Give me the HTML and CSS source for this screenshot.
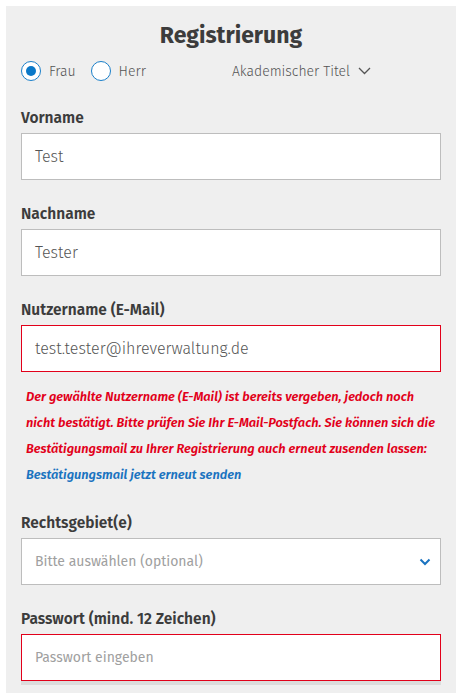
FILE: index.html
```html
<!DOCTYPE html>
<html lang="de">
<head>
<meta charset="utf-8">
<title>Registrierung</title>
<link rel="stylesheet" href="styles.css">
</head>
<body>
<div class="panel">
  <h1 class="title">Registrierung</h1>
  <div class="salutation">
    <label class="radio"><span class="circle checked"></span><span>Frau</span></label>
    <label class="radio"><span class="circle"></span><span>Herr</span></label>
    <span class="title-select">Akademischer Titel
      <svg width="13" height="8" viewBox="0 0 13 8"><path d="M1 1l5.5 5.5L12 1" fill="none" stroke="#555" stroke-width="1.3"/></svg>
    </span>
  </div>

  <div class="field">
    <div class="label">Vorname</div>
    <div class="input">Test</div>
  </div>
  <div class="field">
    <div class="label">Nachname</div>
    <div class="input">Tester</div>
  </div>
  <div class="field">
    <div class="label">Nutzername (E-Mail)</div>
    <div class="input error">test.tester@ihreverwaltung.de</div>
    <p class="error-text">Der gewählte Nutzername (E-Mail) ist bereits vergeben, jedoch noch nicht bestätigt. Bitte prüfen Sie Ihr E-Mail-Postfach. Sie können sich die Bestätigungsmail zu Ihrer Registrierung auch erneut zusenden lassen: <a class="link" href="#">Bestätigungsmail jetzt erneut senden</a></p>
  </div>
  <div class="field after-error">
    <div class="label">Rechtsgebiet(e)</div>
    <div class="input select"><span class="placeholder">Bitte auswählen (optional)</span>
      <svg width="12" height="8" viewBox="0 0 12 8"><path d="M1.5 1.5L6 6l4.5-4.5" fill="none" stroke="#1a73c0" stroke-width="2"/></svg>
    </div>
  </div>
  <div class="field">
    <div class="label">Passwort (mind. 12 Zeichen)</div>
    <div class="input error"><span class="placeholder">Passwort eingeben</span></div>
    <div class="meter"></div>
  </div>
</div>
</body>
</html>
```
FILE: styles.css
```css
* { box-sizing: border-box; }
html, body { margin: 0; padding: 0; background: #fff; }
body {
  font-family: "Fira Sans", "Open Sans", "Noto Sans", sans-serif;
  color: #3c3c3c;
  padding: 6px 8px 0 6px;
}
.panel {
  background: #efefef;
  padding: 14px 15px 20px 15px;
  min-height: 700px;
}
.title {
  margin: 0;
  text-align: center;
  font-size: 23px;
  font-weight: 700;
  line-height: 30px;
  color: #3c3c3c;
}
.salutation {
  display: flex;
  align-items: center;
  height: 26px;
  margin-top: 8px;
}
.radio {
  display: flex;
  align-items: center;
  gap: 8px;
  font-size: 14px;
  font-weight: 300;
  color: #555;
  margin-right: 15px;
}
.circle {
  width: 20px;
  height: 20px;
  border: 1.5px solid #1a7fc9;
  border-radius: 50%;
  background: #fff;
  position: relative;
}
.circle.checked::after {
  content: "";
  position: absolute;
  left: 3.5px; top: 3.5px;
  width: 10px; height: 10px;
  border-radius: 50%;
  background: #0a78c8;
}
.title-select {
  margin-left: 71px;
  display: flex;
  align-items: center;
  gap: 8px;
  font-size: 14px;
  font-weight: 300;
  color: #555;
}
.field { margin-top: 24px; }
.field.after-error { margin-top: 25px; }
.label {
  font-size: 15.5px;
  font-weight: 600;
  line-height: 20px;
  color: #3c3c3c;
  margin-bottom: 5px;
}
.input {
  height: 47px;
  background: #fff;
  border: 1px solid #bdbdbd;
  display: flex;
  align-items: center;
  padding: 0 13px;
  font-size: 16px;
  font-weight: 300;
  color: #555;
}
.input.error { border-color: #e2001a; }
.select { justify-content: space-between; padding-right: 9px; }
.placeholder { color: #a0a0a0; font-size: 14px; font-weight: 400; }
.error-text {
  margin: 12px 0 0 5px;
  font-size: 12.8px;
  font-weight: 600;
  font-style: italic;
  line-height: 26px;
  color: #e2001a;
}
.link { color: #1a73c0; text-decoration: none; }
.meter { height: 4px; background: #dcdcdc; }
```
